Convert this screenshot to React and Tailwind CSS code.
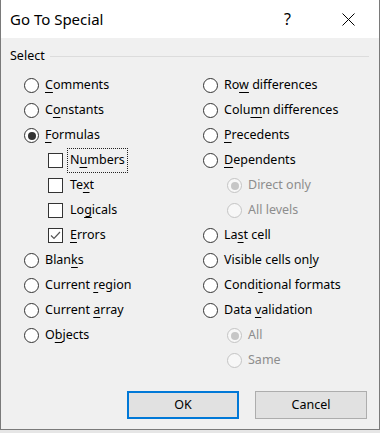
import React from "react";

const font = { fontFamily: '"Noto Sans", "Open Sans", sans-serif' };

// label with one underlined access key
function Label({ text, k, disabled }) {
  if (k == null) return <span className={disabled ? "text-[#8d8d8d]" : ""}>{text}</span>;
  return (
    <span className={disabled ? "text-[#8d8d8d]" : ""}>
      {text.slice(0, k)}
      <span className="underline underline-offset-[3px] decoration-1">{text[k]}</span>
      {text.slice(k + 1)}
    </span>
  );
}

function Radio({ checked, disabled }) {
  return (
    <span
      className={`w-[15px] h-[15px] rounded-full border flex items-center justify-center shrink-0 ${
        disabled ? "border-[#c4c4c4] bg-[#f7f7f7]" : "border-[#333] bg-white"
      }`}
    >
      {checked && (
        <span className={`w-[8px] h-[8px] rounded-full ${disabled ? "bg-[#c6c6c6]" : "bg-[#333]"}`} />
      )}
    </span>
  );
}

function RadioRow({ text, k, checked, disabled, indent }) {
  return (
    <div className={`h-[25px] flex items-center gap-[6px] ${indent ? "pl-[24px]" : ""}`}>
      <Radio checked={checked} disabled={disabled} />
      <Label text={text} k={k} disabled={disabled} />
    </div>
  );
}

function CheckRow({ text, k, checked, focus }) {
  return (
    <div className="h-[25px] flex items-center pl-[24px] gap-[4px]">
      <span className="w-[15px] h-[15px] border border-[#333] bg-white flex items-center justify-center shrink-0">
        {checked && (
          <svg width="11" height="9" viewBox="0 0 11 9">
            <path d="M1 4.5 L4 7.5 L10 1" stroke="#555" strokeWidth="1.2" fill="none" />
          </svg>
        )}
      </span>
      <span className={`px-[2px] py-[2px] border border-dotted ${focus ? "border-[#222]" : "border-transparent"}`}>
        <Label text={text} k={k} />
      </span>
    </div>
  );
}

export default function App() {
  return (
    <div className="w-[380px] h-[433px] bg-[#e6e6e6] text-black" style={font}>
      <div className="h-[430px] flex flex-col border-x border-b border-[#7a7a7a] bg-[#f0f0f0]">
        {/* TITLE BAR */}
        <div className="h-[38px] bg-white flex items-center pl-[9px] pr-[24px]">
          <span className="text-[15px] flex-1">Go To Special</span>
          <span className="text-[16px] w-[14px] mr-[44px]">?</span>
          <svg width="13" height="13" viewBox="0 0 13 13">
            <path d="M0.5 0.5 L12.5 12.5 M12.5 0.5 L0.5 12.5" stroke="#000" strokeWidth="1" />
          </svg>
        </div>

        {/* BODY */}
        <div className="flex-1 flex flex-col px-[9px] text-[12.5px]">
          <div className="h-[20px] mt-[8px] flex items-center gap-[5px] pr-[1px]">
            <span>Select</span>
            <span className="flex-1 h-px bg-[#dcdcdc]" />
          </div>

          <div className="grid grid-cols-[179px_1fr] pl-[14px] mt-[7px]">
            <div className="flex flex-col">
              <RadioRow text="Comments" k={0} />
              <RadioRow text="Constants" k={1} />
              <RadioRow text="Formulas" k={0} checked />
              <CheckRow text="Numbers" k={1} focus />
              <CheckRow text="Text" k={2} />
              <CheckRow text="Logicals" k={2} />
              <CheckRow text="Errors" k={0} checked />
              <RadioRow text="Blanks" k={4} />
              <RadioRow text="Current region" k={8} />
              <RadioRow text="Current array" k={8} />
              <RadioRow text="Objects" k={1} />
            </div>
            <div className="flex flex-col">
              <RadioRow text="Row differences" k={2} />
              <RadioRow text="Column differences" k={4} />
              <RadioRow text="Precedents" k={0} />
              <RadioRow text="Dependents" k={0} />
              <RadioRow text="Direct only" checked disabled indent />
              <RadioRow text="All levels" disabled indent />
              <RadioRow text="Last cell" k={2} />
              <RadioRow text="Visible cells only" k={16} />
              <RadioRow text="Conditional formats" k={5} />
              <RadioRow text="Data validation" k={5} />
              <RadioRow text="All" checked disabled indent />
              <RadioRow text="Same" disabled indent />
            </div>
          </div>

          {/* BUTTONS */}
          <div className="flex justify-end gap-[16px] mt-[18px] pr-[3px]">
            <button className="w-[112px] h-[28px] bg-[#e1e1e1] border-2 border-[#0078d7] text-[12.5px]">OK</button>
            <button className="w-[112px] h-[28px] bg-[#e1e1e1] border border-[#adadad] text-[12.5px]">Cancel</button>
          </div>
        </div>
      </div>
    </div>
  );
}
